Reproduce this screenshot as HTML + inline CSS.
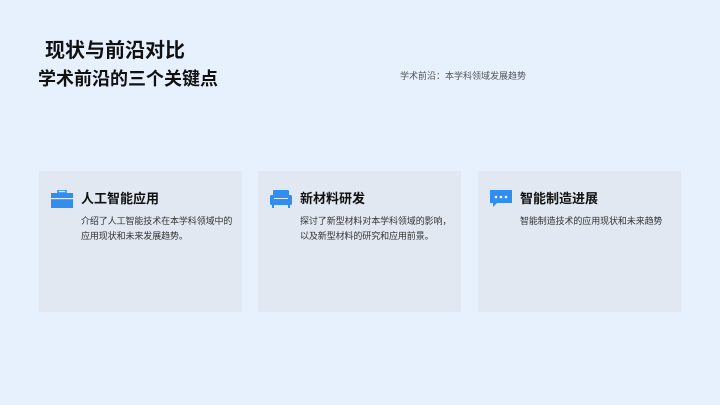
<html><head><style>
body{margin:0;width:720px;height:405px;background:#e6f1fd;font-family:"Liberation Sans","Noto Sans CJK SC",sans-serif;position:relative;overflow:hidden}
.t{position:absolute;white-space:nowrap;color:#111}
.card{position:absolute;top:171px;width:203px;height:141px;background:#e1e8f2}
.h{position:absolute;left:42px;top:17px;font-size:13px;font-weight:bold;color:#111}
.p{position:absolute;left:42px;top:43px;font-size:9px;line-height:15px;color:#333;white-space:nowrap;letter-spacing:-0.1px}
.ic{position:absolute;left:12px;top:19px}
</style></head><body>
<div class="t" style="left:45px;top:34px;font-size:20px;font-weight:bold">现状与前沿对比</div>
<div class="t" style="left:38px;top:65px;font-size:18px;font-weight:bold">学术前沿的三个关键点</div>
<div class="t" style="left:400px;top:69px;font-size:9px;color:#555">学术前沿：本学科领域发展趋势</div>
<div class="card" style="left:39px">
<svg class="ic" width="22" height="18" viewBox="0 0 22 18"><rect x="7" y="0" width="8" height="3" fill="none" stroke="#2f8ef0" stroke-width="1.6"/><rect x="0" y="3" width="22" height="15" fill="#2f8ef0"/><rect x="0" y="8" width="22" height="1.2" fill="#e1e8f2"/></svg>
<div class="h">人工智能应用</div>
<div class="p">介绍了人工智能技术在本学科领域中的<br>应用现状和未来发展趋势。</div></div>
<div class="card" style="left:258px">
<svg class="ic" width="22" height="18" viewBox="0 0 22 18"><rect x="3" y="0" width="16" height="9" rx="1" fill="#2f8ef0"/><rect x="0" y="5" width="22" height="10" rx="1.5" fill="#2f8ef0"/><rect x="4" y="8" width="14" height="1" fill="#e1e8f2"/><rect x="2" y="15" width="2" height="3" fill="#2f8ef0"/><rect x="18" y="15" width="2" height="3" fill="#2f8ef0"/></svg>
<div class="h">新材料研发</div>
<div class="p">探讨了新型材料对本学科领域的影响，<br>以及新型材料的研究和应用前景。</div></div>
<div class="card" style="left:478px">
<svg class="ic" width="22" height="18" viewBox="0 0 22 18"><path d="M0 0H22V13H7L3 17V13H0Z" fill="#2f8ef0"/><circle cx="6" cy="7" r="1.3" fill="#fff"/><circle cx="11" cy="7" r="1.3" fill="#fff"/><circle cx="16" cy="7" r="1.3" fill="#fff"/></svg>
<div class="h">智能制造进展</div>
<div class="p">智能制造技术的应用现状和未来趋势</div></div>
</body></html>
